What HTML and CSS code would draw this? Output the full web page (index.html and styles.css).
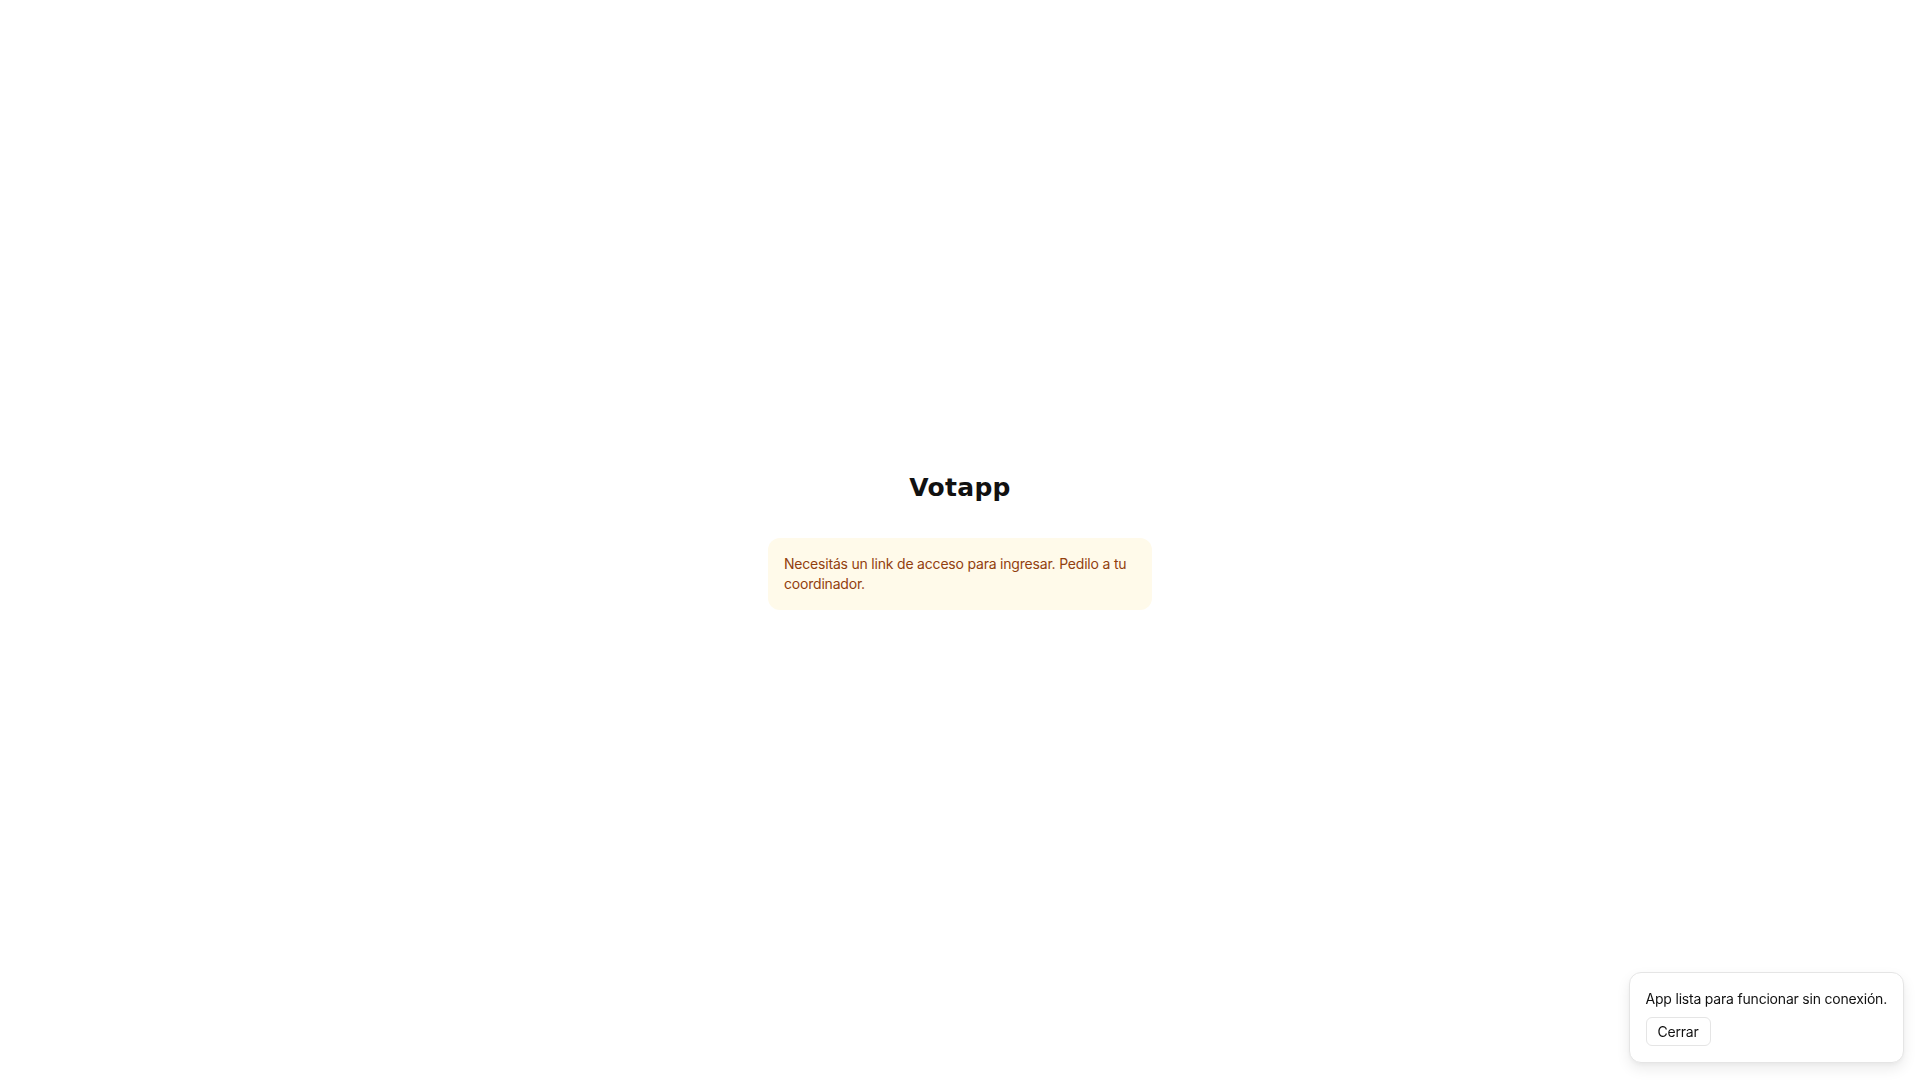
FILE: index.html
```html
<!DOCTYPE html>
<html lang="es">
<head>
<meta charset="utf-8">
<title>Votapp</title>
<link rel="stylesheet" href="styles.css">
</head>
<body>
<main class="page">
  <div class="card">
    <h1 class="title">Votapp</h1>
    <div class="notice">Necesitás un link de acceso para ingresar. Pedilo a tu coordinador.</div>
  </div>
</main>
<div class="toast">
  <p class="toast-text">App lista para funcionar sin conexión.</p>
  <button class="toast-btn" type="button">Cerrar</button>
</div>
</body>
</html>
```
FILE: styles.css
```css
* { box-sizing: border-box; }
html, body { margin: 0; padding: 0; }
body {
  font-family: "Inter", "Liberation Sans", sans-serif;
  background: #ffffff;
  color: #111111;
  -webkit-font-smoothing: antialiased;
}
.page {
  min-height: 100vh;
  display: flex;
  align-items: center;
  justify-content: center;
}
.card {
  width: 384px;
  display: flex;
  flex-direction: column;
  align-items: center;
}
.title {
  margin: 0 0 34px;
  padding-top: 2px;
  font-family: "DejaVu Sans", "Inter", sans-serif;
  font-size: 25px;
  line-height: 32px;
  font-weight: 700;
  color: #111111;
  letter-spacing: 0.3px;
}
.notice {
  width: 100%;
  background: #fffaea;
  color: #92400e;
  border-radius: 12px;
  padding: 16px;
  font-size: 14px;
  line-height: 20px;
  letter-spacing: -0.2px;
}
.toast {
  position: fixed;
  right: 16px;
  bottom: 17px;
  background: #ffffff;
  border: 1px solid #e5e5e5;
  border-radius: 12px;
  padding: 16px;
  box-shadow: 0 6px 14px rgba(0,0,0,0.08), 0 2px 4px rgba(0,0,0,0.04);
  display: flex;
  flex-direction: column;
  align-items: flex-start;
  gap: 8px;
}
.toast-text {
  margin: 0;
  font-size: 14px;
  line-height: 20px;
  letter-spacing: -0.2px;
  color: #111111;
}
.toast-btn {
  font-family: inherit;
  font-size: 14px;
  line-height: 19px;
  letter-spacing: -0.2px;
  padding: 4px 11px;
  background: #ffffff;
  color: #111111;
  border: 1px solid #e5e5e5;
  border-radius: 6px;
  cursor: pointer;
}
```
